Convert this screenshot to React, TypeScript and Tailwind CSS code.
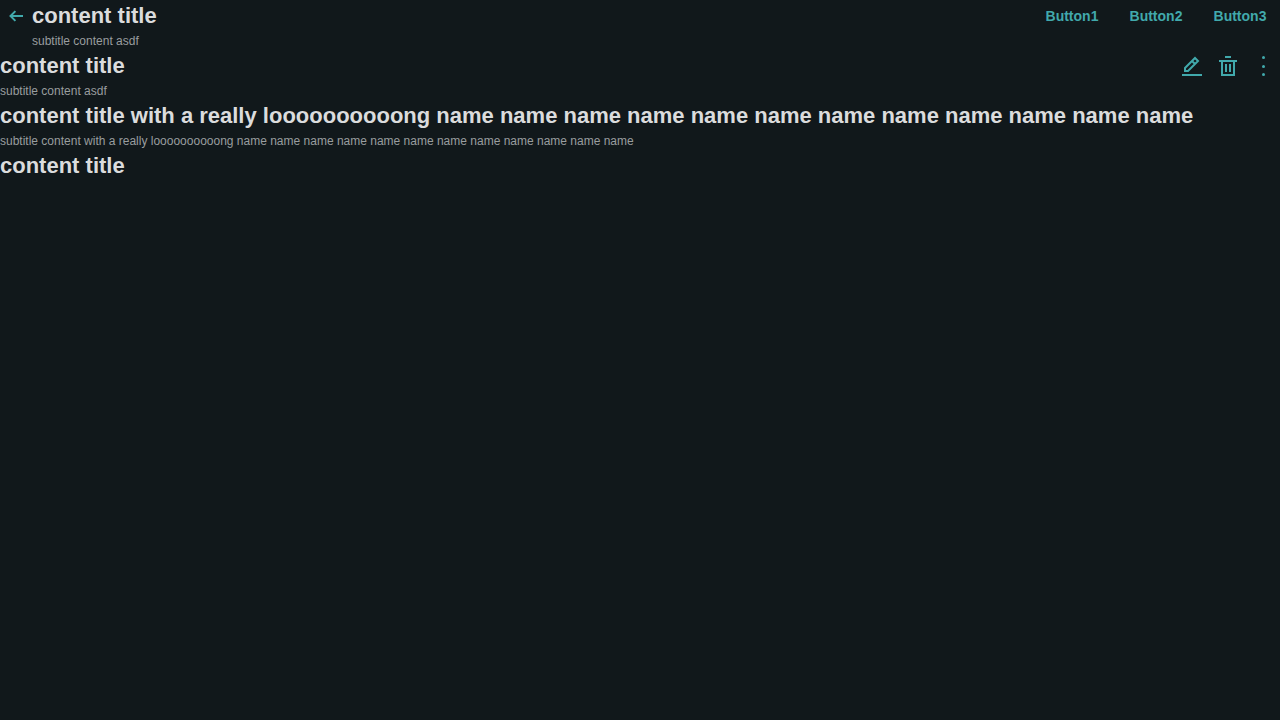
import type { ReactNode } from "react";

type HeaderProps = {
  title: string;
  subtitle?: string;
  onBack?: () => void;
  actions?: ReactNode;
};

function ArrowLeftIcon() {
  return (
    <svg className="size-4" viewBox="0 0 16 16" fill="none" stroke="currentColor" strokeWidth="2" aria-hidden="true">
      <path d="M15 8H3M7.4 3.1L2.5 8l4.9 4.9" />
    </svg>
  );
}

function EditIcon() {
  return (
    <svg className="size-6" viewBox="0 0 24 24" fill="none" stroke="currentColor" strokeWidth="2" aria-hidden="true">
      <path d="M5 17v-3L15 4l3 3L8 17H5ZM12 7l3 3M2 21h20" />
    </svg>
  );
}

function TrashIcon() {
  return (
    <svg className="size-6" viewBox="0 0 24 24" fill="none" stroke="currentColor" strokeWidth="2" aria-hidden="true">
      <path d="M9 3h6M3 7h18M6 7v14h12V7M10 10v8M14 10v8" />
    </svg>
  );
}

function MoreIcon() {
  return (
    <svg className="size-6" viewBox="0 0 24 24" fill="currentColor" aria-hidden="true">
      <circle cx="11.5" cy="3.5" r="1.5" />
      <circle cx="11.5" cy="12.5" r="1.5" />
      <circle cx="11.5" cy="20.5" r="1.5" />
    </svg>
  );
}

function ContentHeader({ title, subtitle, onBack, actions }: HeaderProps) {
  return (
    <header className="flex items-start">
      {onBack && (
        <button type="button" aria-label="Back" onClick={onBack} className="flex size-8 shrink-0 items-center justify-center text-[#41a9ac]">
          <ArrowLeftIcon />
        </button>
      )}
      <div className="min-w-0 flex-1">
        <h2 className="truncate text-[22px] leading-8 font-bold text-[#dbdcdd]">{title}</h2>
        {subtitle && <p className="truncate text-xs leading-[18px] text-[#999d9f]">{subtitle}</p>}
      </div>
      {actions}
    </header>
  );
}

const buttons = ["Button1", "Button2", "Button3"];
const iconActions = [
  { label: "Edit", icon: <EditIcon /> },
  { label: "Delete", icon: <TrashIcon /> },
  { label: "More", icon: <MoreIcon /> },
];
const names = Array(12).fill("name").join(" ");

export default function App() {
  return (
    <main className="min-h-screen bg-[#11181b] font-['Liberation_Sans',Arial,sans-serif]">
      <ContentHeader
        title="content title"
        subtitle="subtitle content asdf"
        onBack={() => {}}
        actions={
          <div className="flex gap-1">
            {buttons.map((label) => (
              <button key={label} type="button" className="h-8 w-20 text-sm font-bold text-[#41a9ac]">
                {label}
              </button>
            ))}
          </div>
        }
      />
      <ContentHeader
        title="content title"
        subtitle="subtitle content asdf"
        actions={
          <div className="flex h-8 items-center gap-3 pr-1">
            {iconActions.map(({ label, icon }) => (
              <button key={label} type="button" aria-label={label} className="text-[#41a9ac]">
                {icon}
              </button>
            ))}
          </div>
        }
      />
      <ContentHeader
        title={`content title with a really loooooooooong ${names}`}
        subtitle={`subtitle content with a really loooooooooong ${names}`}
      />
      <ContentHeader title="content title" />
    </main>
  );
}
